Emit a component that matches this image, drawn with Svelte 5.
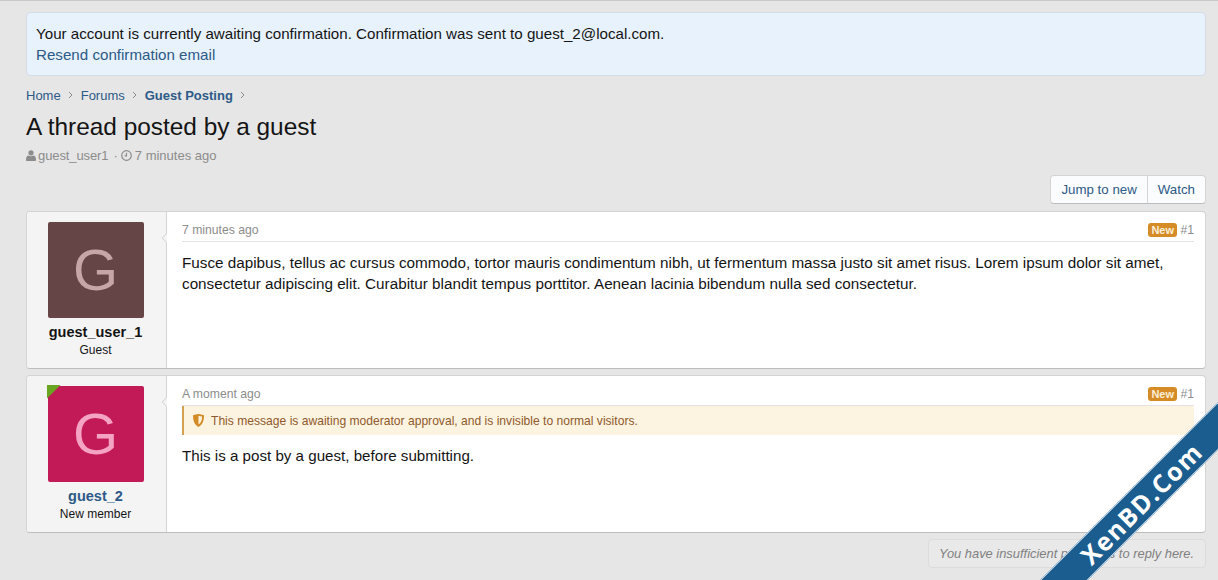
<script>
  const crumbs = ['Home', 'Forums', 'Guest Posting'];
  const body1 = 'Fusce dapibus, tellus ac cursus commodo, tortor mauris condimentum nibh, ut fermentum massa justo sit amet risus. Lorem ipsum dolor sit amet, consectetur adipiscing elit. Curabitur blandit tempus porttitor. Aenean lacinia bibendum nulla sed consectetur.';
</script>

<div class="page">
  <div class="notice">
    <div>Your account is currently awaiting confirmation. Confirmation was sent to guest_2@local.com.</div>
    <a href="#resend">Resend confirmation email</a>
  </div>

  <nav class="crumbs">
    {#each crumbs as crumb, i}
      <a href="#c" class:current={i === crumbs.length - 1}>{crumb}</a>
      <svg width="5" height="8" viewBox="0 0 5 8" fill="none" stroke="#8c8c8c" stroke-width="1"><path d="M1 1l3 3-3 3"/></svg>
    {/each}
  </nav>

  <h1>A thread posted by a guest</h1>

  <div class="meta">
    <svg width="10" height="11" viewBox="0 0 10 11" fill="#8c8c8c"><circle cx="5" cy="2.8" r="2.6"/><path d="M0 10c0-3 1-4.500 2.500-4.500 1.500 1 3.500 1 5 0C9 5.500 10 7 10 10c0 .6-.4 1-1 1H1c-.6 0-1-.4-1-1z"/></svg>
    <span class="who">guest_user1</span>
    <span class="dot">·</span>
    <svg width="11" height="11" viewBox="0 0 11 11" fill="none" stroke="#8c8c8c" stroke-width="1.200"><circle cx="5.500" cy="5.500" r="4.800"/><path d="M5.500 2.800v3H3.500"/></svg>
    <span>7 minutes ago</span>
  </div>

  <div class="actions">
    <div class="btn-group">
      <a href="#new">Jump to new</a>
      <a href="#watch">Watch</a>
    </div>
  </div>

  <article class="post">
    <aside class="user">
      <div class="avatar brown">G</div>
      <div class="name">guest_user_1</div>
      <div class="role">Guest</div>
    </aside>
    <div class="main">
      <header class="post-head">
        <span>7 minutes ago</span>
        <span class="right"><b class="new">New</b> #1</span>
      </header>
      <p>{body1}</p>
    </div>
  </article>

  <article class="post">
    <aside class="user">
      <div class="avatar pink">G<i class="corner"></i></div>
      <div class="name link">guest_2</div>
      <div class="role">New member</div>
    </aside>
    <div class="main">
      <header class="post-head">
        <span>A moment ago</span>
        <span class="right"><b class="new">New</b> #1</span>
      </header>
      <div class="mod">
        <svg width="11" height="13" viewBox="0 0 11 13"><path d="M0 1.200C2 .8 3.800.4 5.500 0 7.200.4 9 .8 11 1.200 11 7 9.500 10.500 5.500 13 1.500 10.500 0 7 0 1.200z" fill="#d28b26"/><path d="M5.500 1.800c1.200.3 2.400.5 3.600.8 0 3.800-1 6-3.600 8z" fill="#fdf3e1"/></svg>
        This message is awaiting moderator approval, and is invisible to normal visitors.
      </div>
      <p class="short">This is a post by a guest, before submitting.</p>
    </div>
  </article>

  <div class="actions">
    <div class="no-reply">You have insufficient privileges to reply here.</div>
  </div>

  <div class="ribbon"><span>XenBD.Com</span></div>
</div>

<style>
  :global(body) {
    margin: 0;
    background: #e6e6e6;
  }

  .page {
    position: relative;
    height: 579px;
    overflow: hidden;
    border-top: 1px solid #c9c9c9;
    padding: 11px 12px 0 26px;
    width: 1180px;
    font-family: "Liberation Sans", Arial, sans-serif;
    color: #141414;
    font-size: 15.250px;
  }

  a {
    color: #2d5a87;
    text-decoration: none;
  }

  .notice {
    height: 64px;
    padding: 10px 9px 0;
    box-sizing: border-box;
    font-size: 15.150px;
    line-height: 21px;
    background: #e8f2fc;
    border: 1px solid #d3dde6;
    border-radius: 4px;
  }

  .crumbs {
    display: flex;
    align-items: center;
    gap: 7.500px;
    margin-top: 11px;
    height: 16px;
    font-size: 13px;
  }

  .crumbs .current {
    font-weight: bold;
  }

  h1 {
    margin: 9px 0 0;
    font-size: 24.400px;
    font-weight: normal;
    line-height: 30px;
  }

  .meta {
    display: flex;
    align-items: center;
    gap: 3px;
    margin-top: 4px;
    height: 18px;
    font-size: 13px;
    color: #8c8c8c;
  }

  .who {
    margin-left: -1px;
    letter-spacing: -0.1px;
  }

  .dot {
    margin-left: 2px;
  }

  .actions {
    display: flex;
    justify-content: flex-end;
  }

  .btn-group {
    display: flex;
    margin-top: 11px;
    height: 29px;
    background: #fafcfd;
    border: 1px solid #d4d4d4;
    border-bottom-color: #bdbdbd;
    border-radius: 4px;
    box-sizing: border-box;
    font-size: 13.300px;
    line-height: 27px;
  }

  .btn-group a {
    padding: 0 10px;
  }

  .btn-group a + a {
    border-left: 1px solid #d4d4d4;
  }

  .post {
    display: flex;
    height: 158px;
    box-sizing: border-box;
    margin-top: 6px;
    background: #fff;
    border: 1px solid #d4d4d4;
    border-bottom-color: #bdbdbd;
    border-radius: 4px;
  }

  .post:first-of-type {
    margin-top: 7px;
  }

  .user {
    position: relative;
    flex: none;
    width: 140px;
    box-sizing: border-box;
    padding: 10px 2px 0 0;
    background: #f4f4f4;
    border-right: 1px solid #d4d4d4;
    border-radius: 4px 0 0 4px;
    text-align: center;
  }

  .user::after {
    content: '';
    position: absolute;
    top: 22px;
    right: -5px;
    width: 8px;
    height: 8px;
    background: #f4f4f4;
    transform: rotate(45deg);
    border-left: 1px solid #d4d4d4;
    border-bottom: 1px solid #d4d4d4;
    box-sizing: border-box;
    clip-path: polygon(0 0, 0 100%, 100% 100%);
  }

  .avatar {
    position: relative;
    width: 96px;
    height: 96px;
    margin: 0 auto;
    border-radius: 2px;
    font-size: 58px;
    line-height: 96px;
  }

  .brown {
    background: #654545;
    color: #c6a6a6;
  }

  .pink {
    background: #c21a56;
    color: #f4a3c3;
  }

  .corner {
    position: absolute;
    top: -1px;
    left: -1px;
    width: 14px;
    height: 14px;
    background: #6aa521;
    clip-path: polygon(0 0, 100% 0, 0 100%);
  }

  .name {
    margin-top: 5px;
    font-size: 14.500px;
    font-weight: bold;
    line-height: 18px;
  }

  .link {
    color: #2d5a87;
  }

  .role {
    margin-top: 1px;
    font-size: 12px;
    line-height: 16px;
  }

  .main {
    flex: 1;
    min-width: 0;
    padding: 11px 11px 0 15px;
  }

  .post-head {
    display: flex;
    justify-content: space-between;
    height: 18px;
    border-bottom: 1px solid #e3e3e3;
    font-size: 12.200px;
    line-height: 14px;
    color: #8c8c8c;
  }

  .new {
    display: inline-block;
    padding: 0 3px;
    border-radius: 3px;
    background: #d68c26;
    color: #fbeed9;
    font-size: 11px;
    font-weight: bold;
    line-height: 14px;
  }

  p {
    margin: 10px 0 0;
    line-height: 21px;
  }

  .short {
    font-size: 15.150px;
  }

  .mod {
    display: flex;
    align-items: center;
    gap: 7px;
    height: 29px;
    padding-left: 9px;
    background: #fdf3e1;
    border-left: 2px solid #d6a052;
    font-size: 12.100px;
    color: #8f5a2b;
  }

  .no-reply {
    margin-top: 6px;
    width: 278px;
    height: 29px;
    box-sizing: border-box;
    padding-left: 10px;
    border: 1px solid #dcdcdc;
    border-radius: 4px;
    background: #e9e9e9;
    font-size: 12.900px;
    font-style: italic;
    line-height: 27px;
    color: #808080;
    white-space: nowrap;
  }

  .ribbon {
    position: absolute;
    left: 1141px;
    top: 501px;
    width: 340px;
    height: 32px;
    margin: -16px 0 0 -170px;
    background: #1a5d8e;
    border-top: 1px solid #dbe7ef;
    border-bottom: 1px solid #dbe7ef;
    transform: rotate(-45deg);
    text-align: center;
    color: #fff;
    font-family: "Open Sans", sans-serif;
    font-size: 25px;
    font-weight: 700;
    line-height: 32px;
    letter-spacing: 1.500px;
  }
</style>
